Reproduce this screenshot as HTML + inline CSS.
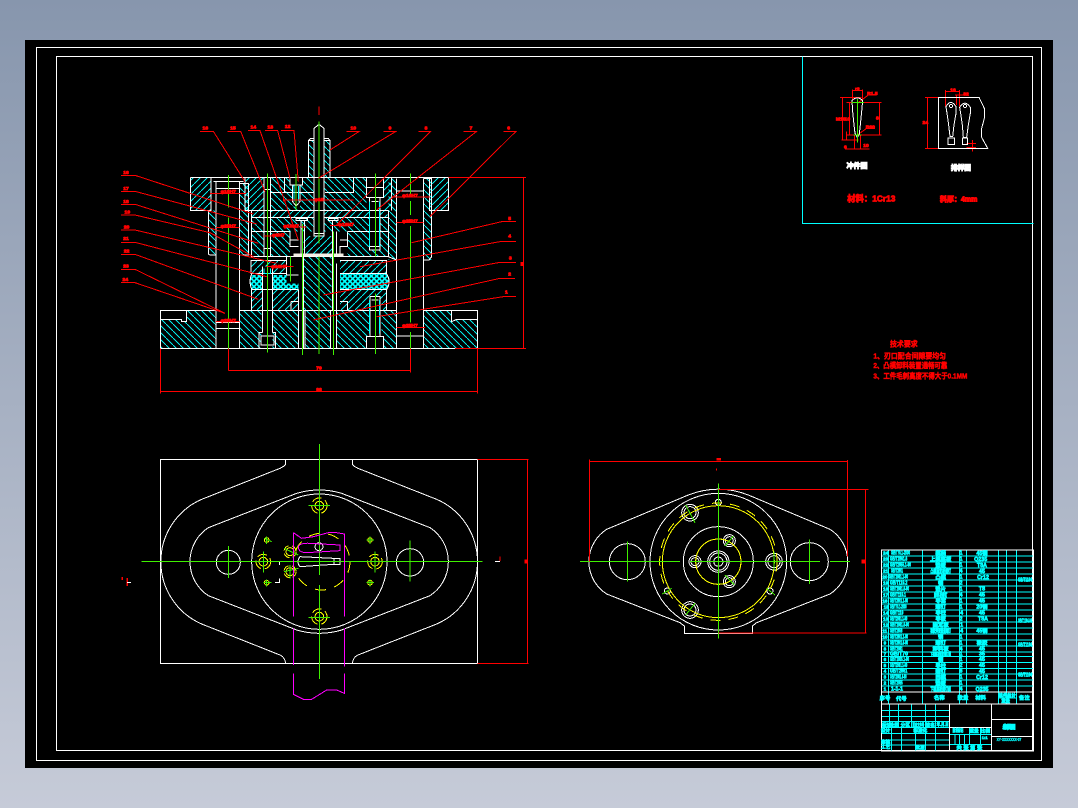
<!DOCTYPE html>
<html lang="zh"><head><meta charset="utf-8"><title>总装图</title>
<style>
html,body{margin:0;padding:0;width:1078px;height:808px;overflow:hidden;background:linear-gradient(#8796ad,#c6cbd8)}
svg{position:absolute;left:0;top:0;display:block}
text{font-family:"Liberation Sans","Noto Sans CJK SC",sans-serif;font-weight:700}
.w{stroke:#fff;fill:none;stroke-width:3}
.r{stroke:#f00;fill:none;stroke-width:3}
.g{stroke:#3ff000;fill:none;stroke-width:3}
.y{stroke:#ff0;fill:none;stroke-width:3}
.m{stroke:#f0f;fill:none;stroke-width:3}
.c{stroke:#0ff;fill:none;stroke-width:3}
.rt text{fill:#f00;stroke:#f00;stroke-width:2.500;text-anchor:middle;font-size:15px}
.ct text{fill:#0ff;stroke:#0ff;stroke-width:2;font-size:16px}
.mid text{text-anchor:middle}
</style></head><body>
<svg width="1078" height="808" viewBox="0 0 1078 808" shape-rendering="crispEdges">
<defs>
<pattern id="a" width="21" height="21" patternUnits="userSpaceOnUse"><path d="M-2 23L23-2" stroke="#00e8e8" stroke-width="2.6"/></pattern>
<pattern id="b" width="21" height="21" patternUnits="userSpaceOnUse"><path d="M-2-2L23 23" stroke="#00e8e8" stroke-width="2.6"/></pattern>
<pattern id="x" width="16" height="16" patternUnits="userSpaceOnUse"><path d="M0 0L16 16M16 0L0 16" stroke="#00ffff" stroke-width="4.500"/></pattern>
</defs>
<rect x="25" y="40" width="1028" height="728" fill="#000"/>
<rect x="36.500" y="47.500" width="1005" height="713" fill="none" stroke="#fff"/>
<rect x="56.500" y="56.500" width="976" height="694" fill="none" stroke="#fff"/>

<!-- section view -->
<g transform="translate(110 100) scale(.33333)">
<g>
<rect x="241" y="232" width="62" height="99" fill="url(#a)"/>
<rect x="958" y="232" width="58" height="99" fill="url(#a)"/>
<rect x="405" y="232" width="57" height="99" fill="url(#a)"/>
<rect x="482" y="232" width="130" height="99" fill="url(#b)"/>
<rect x="644" y="232" width="126" height="99" fill="url(#b)"/>
<rect x="820" y="232" width="25" height="99" fill="url(#a)"/>
<rect x="295" y="331" width="23" height="134" fill="url(#b)"/>
<rect x="388" y="250" width="27" height="215" fill="url(#b)"/>
<rect x="835" y="235" width="25" height="245" fill="url(#b)"/>
<rect x="940" y="235" width="25" height="245" fill="url(#b)"/>
<rect x="425" y="333" width="187" height="19" fill="url(#a)"/>
<rect x="643" y="333" width="190" height="19" fill="url(#a)"/>
<rect x="425" y="352" width="187" height="43" fill="url(#b)"/>
<rect x="643" y="352" width="190" height="43" fill="url(#b)"/>
<rect x="425" y="395" width="115" height="75" fill="url(#b)"/>
<rect x="580" y="408" width="88" height="52" fill="url(#a)"/>
<rect x="712" y="395" width="123" height="75" fill="url(#b)"/>
<rect x="425" y="482" width="105" height="38" fill="url(#a)"/>
<rect x="690" y="482" width="140" height="38" fill="url(#a)"/>
<path d="M425 525Q415 546 425 568H565V525Z" fill="url(#x)"/>
<path d="M690 522H830Q845 545 830 568H690Z" fill="url(#x)"/>
<rect x="425" y="568" width="33" height="63" fill="url(#a)"/>
<rect x="488" y="568" width="77" height="63" fill="url(#a)"/>
<rect x="690" y="568" width="140" height="63" fill="url(#a)"/>
<rect x="582" y="470" width="83" height="161" fill="url(#b)"/>
<rect x="585" y="631" width="75" height="114" fill="url(#b)"/>
<path d="M151 660H215V665H230V631H318V745H151Z" fill="url(#b)"/>
<rect x="388" y="631" width="67" height="114" fill="url(#b)"/>
<rect x="488" y="631" width="77" height="114" fill="url(#b)"/>
<rect x="680" y="631" width="100" height="114" fill="url(#b)"/>
<rect x="815" y="631" width="45" height="114" fill="url(#b)"/>
<path d="M940 631H1025V665L1040 658H1103V745H940Z" fill="url(#b)"/>
<rect x="595" y="122" width="17" height="110" fill="url(#b)"/>
<rect x="642" y="122" width="18" height="110" fill="url(#b)"/>
<!-- holes -->
<g fill="#000">
<rect x="462" y="232" width="20" height="238"/><rect x="458" y="500" width="30" height="200"/>
<rect x="540" y="232" width="38" height="25"/><rect x="548" y="255" width="22" height="65"/>
<rect x="770" y="232" width="50" height="60"/><rect x="778" y="292" width="32" height="160"/>
<rect x="778" y="590" width="32" height="155"/><rect x="770" y="710" width="50" height="35"/>
<rect x="540" y="395" width="40" height="75"/><rect x="668" y="395" width="44" height="75"/>
<rect x="530" y="470" width="52" height="80"/><rect x="665" y="470" width="25" height="161"/>
</g>
</g>
<path class="w" d="M241 232H1016V331H958V232M241 232V331H303V232M318 245V745M388 245V745M310 245H400M318 265H388M318 668H388M318 685H388M295 331V462L300 465H318M388 465H415V250H388M860 235V745M940 235V745M845 232V331M860 273H940M860 708H940M835 331V470L860 480M965 331V470L957 480H940M940 235H965V331M151 631H230V665H215V658H151ZM151 631V745H1103V631H1025V665L1040 658H1103M230 631H318M388 631H860M940 631H1025M405 232V331H835M425 333V470H835V333M425 352H612M643 352H835M425 395H540M712 395H835M423 482H530V520H423ZM690 482H830V520H690M425 522Q415 545 425 568H565M830 522Q845 545 830 568H690M425 568V631M830 568V631M580 470V745M668 470V631M585 631V745M662 631V745M565 568V745M680 490V745M540 395V440H565M540 420H565M712 395V440H690V470M690 420H712M543 605H565M543 605V631M690 605H712V631M530 470V525H565M612 400V85L627 73L642 85V400M612 400H642V408H612ZM595 232V122L602 115H612M660 232V122L655 115H642M595 122H612M642 122H660M558 355H592V362H558ZM656 355H684V362H656ZM668 362V460M680 395V460M573 362V470M583 362V460M462 232V470M482 232V470M462 268H482M462 445H482M458 500V697M488 500V697M447 745V697H458M497 745V697H488M453 708H492V735H453ZM482 277H610M645 277H730V232M523 232V277M540 232V255H578V232M548 255V305L558 318L570 305V255M770 232V262H820V232M770 262V292H820V262M778 292V450H810V292M785 305H805M780 440H810M770 745V710H820V745M780 710V590H810V710M785 600H805M582 470H665"/>
<path d="M548 258H552V305M566 258V305M779 305V440M809 305V440M779 600V700M809 600V700M462 505V520H482V505" stroke="#0ff" stroke-width="3" fill="none"/>
<rect x="550" y="460" width="150" height="10" fill="#f4f0e6"/>
<path class="g" d="M355 225V323M355 353V745M472 220V758M558 222V330M627 65V430M627 470V762M796 220V470M796 580V762M901 220V285M901 303V345M901 378V668M901 696V745M577 372V765M670 395V765M541 470V545"/>
<path class="r" d="M33 226H75L430 342M33 274H75L440 372M33 313H75L445 430M33 345H75L300 398L430 470M33 390H75L500 490M33 427H75L470 530M33 463H75L445 598M33 508H75L345 640M33 548H75L345 640M270 94H310L405 245M353 94H392L465 275M414 92H450L565 420M465 92H503L540 235M513 92H552L565 245M710 94H748L660 150M820 94H858L625 235M925 94H962L680 375M1060 94H1100L800 330M1180 94H1218L960 350M1218 365H1175L905 428M1218 424H1175L750 500M1218 487H1170L640 585M1215 535H1170L610 660M1218 590H1180L800 650M1015 232H1248M1035 745H1248M1241 232V745M355 745V812M901 745V818M355 812H901M151 745V880M1102 745V880M151 875H1102M300 281H408M318 383H388M845 291H960M860 368H940M318 665H388M860 682H945M462 408H520M520 292V305M520 300H730M525 381H590M660 377H725M470 500H550M627 20V45"/>
<rect x="1231" y="486" width="9" height="12" fill="#f00"/>
<g class="rt">
<text x="355" y="279">φ16H7</text><text x="355" y="382">φ25H7</text><text x="900" y="291">φ16H7</text><text x="900" y="367">φ25H7</text><text x="355" y="666">φ25H7</text><text x="900" y="681">φ25H7</text><text x="505" y="410">φ8H7</text><text x="627" y="303">φ18</text><text x="543" y="382">φ10H7</text><text x="708" y="378">φ10H7</text><text x="507" y="504">φ10H7</text>
<text x="627" y="808">79</text><text x="627" y="873">96</text>
<text x="286" y="88">16</text><text x="369" y="88">15</text><text x="430" y="86">14</text><text x="481" y="86">13</text><text x="533" y="84">12</text><text x="730" y="88">10</text><text x="840" y="88">9</text><text x="948" y="88">8</text><text x="1083" y="88">7</text><text x="1196" y="88">6</text>
<text x="48" y="222">16</text><text x="48" y="270">17</text><text x="48" y="309">18</text><text x="52" y="340">19</text><text x="50" y="385">20</text><text x="48" y="420">21</text><text x="50" y="458">22</text><text x="48" y="503">23</text><text x="46" y="543">24</text>
<text x="1199" y="360">5</text><text x="1199" y="413">4</text><text x="1201" y="478">3</text><text x="1199" y="527">2</text><text x="1189" y="580">1</text>
</g>
</g>

<!-- top right box -->
<g transform="translate(800 50) scale(.33333)">
<path class="c" d="M7 20V520H700"/>
<path class="r" d="M128 142V270M120 142H185M125 270H175M140 157H245M148 157V255M238 157V255M140 255H245M157 122H188M157 118V150M188 118V150M172 160L205 135H230M172 255L200 235H225M163 255V297M182 255V297M135 297H208M140 245V270M382 142V295M375 142H415M375 295H415M436 125H478M436 120V170M478 120V170M465 135H505M470 135V165M500 280H528M500 292H528M518 270V305"/>
<path class="w" d="M156 152Q172 135 188 152L185 185L182 215L178 252L172 262L165 250L161 215L158 185ZM415 142H537L553 175V205L545 235V262L563 295H415ZM438 170Q452 145 468 170V190L462 225L458 260H450L446 225L441 190ZM479 172Q494 147 511 172V190L505 225L500 262H490L487 225L482 190ZM444 264H464V284H444ZM487 264H503V284H487Z"/>
<circle cx="453" cy="168" r="5" class="w"/><circle cx="495" cy="168" r="5" class="w"/>
<path class="g" d="M155 157H192M172 147V277M160 255H185" stroke-width="4"/>
<g class="rt"><text x="172" y="122">r2</text><text x="217" y="135">R1.5</text><text x="211" y="235">R60</text><text x="122" y="212">M10</text><text x="142" y="212">10</text><text x="232" y="208">8</text><text x="198" y="291">10</text><text x="136" y="295">6</text><text x="376" y="222">24</text><text x="459" y="124">16</text><text x="498" y="137">32</text></g>
<g text-anchor="middle">
<text x="171" y="354" font-size="21" fill="#fff" stroke="#fff" stroke-width="3">冲件图</text>
<text x="483" y="360" font-size="20" fill="#fff" stroke="#fff" stroke-width="3">排样图</text>
<text x="214" y="454" font-size="25" fill="#f00" stroke="#f00" stroke-width="2.500">材料：1Cr13</text>
<text x="476" y="454" font-size="21" fill="#f00" stroke="#f00" stroke-width="3">料厚：4mm</text>
</g>
</g>

<!-- tech notes -->
<g transform="translate(860 330) scale(.33333)" fill="#f00" stroke="#f00" stroke-width="1.500">
<text x="90" y="50" font-size="22" textLength="83" lengthAdjust="spacingAndGlyphs">技术要求</text>
<text x="40" y="86" font-size="23" textLength="218" lengthAdjust="spacingAndGlyphs">1、刃口配合间隙要均匀</text>
<text x="40" y="114" font-size="23" textLength="222" lengthAdjust="spacingAndGlyphs">2、凸模卸料装置通畅可靠</text>
<text x="40" y="146" font-size="23" textLength="282" lengthAdjust="spacingAndGlyphs">3、工件毛刺高度不得大于0.1MM</text>
</g>

<!-- plan left -->
<g transform="translate(140 440) scale(.33333)">
<rect x="61" y="58" width="952" height="612" class="w"/>
<path class="w" d="M437 58V72Q435 78 420 85L185 178A204 204 0 0 0 185 552L420 645Q435 652 437 670M637 58V72Q639 78 654 85L890 178A204 204 0 0 1 890 552L654 645Q639 652 637 670M205 263L470 160Q538 140 605 160L870 263A122 122 0 0 1 870 467L605 570Q538 590 470 570L205 467A122 122 0 0 1 205 263ZM480 350L580 355H600V373H580L480 380Q468 365 480 350ZM582 355V373M418 375V365H465M418 415V427H405" />
<circle cx="538" cy="365" r="203" class="w"/><circle cx="265" cy="367" r="36" class="w"/><circle cx="810" cy="367" r="41" class="w"/><circle cx="537" cy="320" r="12" class="w"/>
<g class="y">
<circle cx="545" cy="365" r="85" stroke-dasharray="34 26"/>
<circle cx="538" cy="197" r="13"/><circle cx="538" cy="197" r="23" stroke-dasharray="30 12"/>
<circle cx="538" cy="530" r="13"/><circle cx="538" cy="530" r="23" stroke-dasharray="30 12"/>
<circle cx="370" cy="365" r="13"/><circle cx="370" cy="365" r="22" stroke-dasharray="30 12"/>
<circle cx="705" cy="365" r="13"/><circle cx="705" cy="365" r="22" stroke-dasharray="30 12"/>
<circle cx="450" cy="335" r="12"/><circle cx="450" cy="335" r="18" stroke-dasharray="20 10"/>
<circle cx="450" cy="395" r="12"/><circle cx="450" cy="395" r="18" stroke-dasharray="20 10"/>
<circle cx="380" cy="300" r="7"/><circle cx="690" cy="300" r="7"/><circle cx="380" cy="428" r="7"/><circle cx="690" cy="428" r="7"/>
</g>
<path class="g" d="M5 365H1028M538 12V405M538 435V717M265 318V414M810 302V425M505 197H570M505 532H570M370 335V398M705 335V398M432 325L475 345M432 395L475 385M450 375V415M372 295L395 305M680 300L702 300M370 428L395 428M680 428L702 428M380 290V312M690 290V312M380 418V440M690 418V440"/>
<path class="m" d="M460 278V530M460 565V675M460 700V763L490 778H515L560 750H590L613 760V700M613 680V565M613 530V282L590 278H565L520 290L485 295L460 278M475 320Q480 308 510 310L600 315V332L500 338Q475 338 475 320Z"/>
<path class="r" d="M1013 58H1165M1013 670H1165M1163 58V670"/>
<path d="M1065 365H1080" stroke="#fff" stroke-width="3"/>
<path d="M1080 350V363" stroke="#f00" stroke-width="4"/>
<rect x="1153" y="358" width="9" height="12" fill="#f00"/>
</g>
<path d="M127 578V586M122 577V580" stroke="#f00" stroke-width="1.500"/>
<rect x="127" y="582" width="4" height="1" fill="#fff"/>

<!-- plan right -->
<g transform="translate(575 450) scale(.33333)">
<path class="w" d="M328 550V528L315 518L95 432A115 115 0 0 1 95 238L340 135Q430 100 520 135L765 238A115 115 0 0 1 765 432L545 518L532 528V550Z"/>
<g class="w">
<circle cx="430" cy="335" r="205"/><circle cx="430" cy="335" r="105"/><circle cx="157" cy="335" r="54"/><circle cx="703" cy="335" r="57"/>
<circle cx="430" cy="335" r="32"/><circle cx="430" cy="335" r="26"/><circle cx="430" cy="335" r="14"/>
<circle cx="345" cy="188" r="25"/><circle cx="345" cy="188" r="18"/><circle cx="345" cy="480" r="25"/><circle cx="345" cy="480" r="18"/><circle cx="597" cy="335" r="25"/><circle cx="597" cy="335" r="18"/>
<circle cx="360" cy="335" r="18"/><circle cx="360" cy="335" r="12"/><circle cx="463" cy="272" r="18"/><circle cx="463" cy="272" r="12"/><circle cx="463" cy="395" r="18"/><circle cx="463" cy="395" r="12"/>
<circle cx="430" cy="157" r="9"/><circle cx="277" cy="423" r="9"/><circle cx="585" cy="423" r="9"/>
</g>
<g class="y"><circle cx="430" cy="335" r="168"/><circle cx="430" cy="335" r="176" stroke-dasharray="30 24"/><circle cx="430" cy="335" r="68"/></g>
<path class="g" d="M15 335H315M345 335H735M765 335H825M430 100V565M157 275V395M703 268V402M332 165L360 218M332 495L360 460M450 288L475 258M450 375L478 405M262 432L290 415M575 415L600 435M597 305V360"/>
<path class="r" d="M43 35H818M43 28V335M818 30V320M430 118H880M430 549H875M872 118V549M424 55V62"/>
<rect x="424" y="24" width="14" height="8" fill="#f00"/><rect x="860" y="328" width="10" height="12" fill="#f00"/>
</g>

<!-- title block -->
<g transform="translate(875 545) scale(.33333)">
<path class="c" d="M19 33H475M19 51H475M19 69H475M19 87H475M19 105H475M19 123H475M19 141H475M19 159H475M19 177H475M19 195H475M19 213H475M19 231H475M19 249H475M19 267H475M19 285H475M19 303H475M19 321H475M19 335H475M19 352H475M19 370H475M19 387H475M19 405H475M19 423H475M41 15V441M142 15V477M253 15V477M275 15V477M370 15V477M394 15V477M424 15V477M41 441V477M370 459H424M19 496H223M19 514H223M19 530H223M19 547H223M19 565H223M19 585H223M19 600H223M43 477V547M71 477V547M109 477V547M151 477V618M181 477V618M49 547V618M79 547V618M121 547V618M223 568H349M223 598H349M283 547V598M317 547V598M240 568V598M254 568V598M268 568V598"/>
<path class="w" d="M19 15H475V618H19ZM19 441H475M19 477H475M223 477V618M349 477V618M349 523H475M349 574H475M223 547H349"/>
<g class="ct" font-size="15">
<g style="font-size:13px">
<text x="24" y="29" style="font-size:14px">24</text><text x="24" y="47" style="font-size:14px">23</text><text x="24" y="65" style="font-size:14px">22</text><text x="24" y="83" style="font-size:14px">21</text><text x="22" y="101" style="font-size:14px">20</text><text x="24" y="119" style="font-size:14px">19</text><text x="24" y="137" style="font-size:14px">18</text><text x="24" y="155" style="font-size:14px">17</text><text x="22" y="172" style="font-size:14px">16</text><text x="26" y="190" style="font-size:14px">15</text><text x="24" y="208" style="font-size:14px">14</text><text x="24" y="226" style="font-size:14px">13</text><text x="24" y="244" style="font-size:14px">12</text><text x="22" y="262" style="font-size:14px">11</text><text x="22" y="280" style="font-size:14px">10</text><text x="26" y="298" style="font-size:14px">9</text><text x="26" y="316" style="font-size:14px">8</text><text x="26" y="332" style="font-size:14px">7</text><text x="26" y="348" style="font-size:14px">6</text><text x="26" y="366" style="font-size:14px">5</text><text x="26" y="383" style="font-size:14px">4</text><text x="26" y="401" style="font-size:14px">3</text><text x="26" y="419" style="font-size:14px">2</text><text x="26" y="437" style="font-size:14px">1</text>
</g>
<g>
<text x="48" y="29" textLength="57" lengthAdjust="spacingAndGlyphs">GB/T70.1-2000</text><text x="45" y="47" textLength="52" lengthAdjust="spacingAndGlyphs">GB/T2861.6</text><text x="45" y="65" textLength="63" lengthAdjust="spacingAndGlyphs">GB/T2855.1-90</text><text x="48" y="83" textLength="36" lengthAdjust="spacingAndGlyphs">GB/T2851</text><text x="42" y="101" textLength="57" lengthAdjust="spacingAndGlyphs">GB/T2861.1-90</text><text x="45" y="119" textLength="52" lengthAdjust="spacingAndGlyphs">GB/T119.2</text><text x="45" y="137" textLength="57" lengthAdjust="spacingAndGlyphs">GB/T2861.6-90</text><text x="45" y="155" textLength="48" lengthAdjust="spacingAndGlyphs">GB/T119.1</text><text x="45" y="172" textLength="54" lengthAdjust="spacingAndGlyphs">GB/T2861.1-90</text><text x="45" y="190" textLength="50" lengthAdjust="spacingAndGlyphs">GB/T70.1-2000</text><text x="45" y="208" textLength="40" lengthAdjust="spacingAndGlyphs">GB/T119</text><text x="45" y="226" textLength="52" lengthAdjust="spacingAndGlyphs">GB/T2861.1-90</text><text x="45" y="244" textLength="57" lengthAdjust="spacingAndGlyphs">GB/T2861.6-90</text><text x="45" y="262" textLength="37" lengthAdjust="spacingAndGlyphs">GB/T2858</text><text x="45" y="280" textLength="54" lengthAdjust="spacingAndGlyphs">GB/T2861.1-90</text><text x="45" y="298" textLength="54" lengthAdjust="spacingAndGlyphs">GB/T2861.6-90</text><text x="45" y="316" textLength="38" lengthAdjust="spacingAndGlyphs">GB/T2861</text><text x="45" y="332" textLength="54" lengthAdjust="spacingAndGlyphs">GB/T70</text><text x="45" y="348" textLength="57" lengthAdjust="spacingAndGlyphs">GB/T2855.1-90</text><text x="45" y="366" textLength="52" lengthAdjust="spacingAndGlyphs">GB/T2861.1-90</text><text x="45" y="383" textLength="52" lengthAdjust="spacingAndGlyphs">GB/T2861</text><text x="45" y="401" textLength="50" lengthAdjust="spacingAndGlyphs">GB/T2861.6-90</text><text x="45" y="419" textLength="38" lengthAdjust="spacingAndGlyphs">GB/T2855</text><text x="48" y="437" textLength="36" lengthAdjust="spacingAndGlyphs">1-1-1</text>
</g>
<g class="mid">
<text x="197" y="30">模柄</text><text x="197" y="48">上模座板</text><text x="197" y="66">垫板</text><text x="197" y="84" textLength="62" lengthAdjust="spacingAndGlyphs">凸模固定板螺钉</text><text x="197" y="102">凸模</text><text x="197" y="120">销</text><text x="197" y="138">垫片</text><text x="197" y="156" textLength="40" lengthAdjust="spacingAndGlyphs">卸料板螺钉</text><text x="197" y="173">导套</text><text x="197" y="191">螺钉</text><text x="197" y="209">导柱</text><text x="197" y="227">导板</text><text x="197" y="245">固定板</text><text x="197" y="263" textLength="62" lengthAdjust="spacingAndGlyphs">橡胶弹簧垫圈螺钉</text><text x="197" y="281">销</text><text x="197" y="299">螺钉</text><text x="197" y="317">卸料板</text><text x="197" y="333" textLength="62" lengthAdjust="spacingAndGlyphs">下模座板固定螺钉组</text><text x="197" y="349">销</text><text x="197" y="367">导柱</text><text x="197" y="384">螺钉</text><text x="197" y="402">凹模</text><text x="197" y="420">垫板</text><text x="197" y="438" textLength="62" lengthAdjust="spacingAndGlyphs">下模座板螺钉组</text>
</g>
<g class="mid" style="font-size:13px">
<text x="258" y="29">1</text><text x="258" y="47">1</text><text x="258" y="65">1</text><text x="258" y="83">4</text><text x="258" y="101">1</text><text x="258" y="119">2</text><text x="258" y="137">1</text><text x="258" y="155">4</text><text x="258" y="172">1</text><text x="258" y="190">1</text><text x="260" y="208">4</text><text x="258" y="226">2</text><text x="260" y="244">1</text><text x="260" y="262">4</text><text x="258" y="280">1</text><text x="258" y="298">1</text><text x="258" y="316">4</text><text x="258" y="332">1</text><text x="258" y="348">1</text><text x="258" y="366">2</text><text x="258" y="383">6</text><text x="258" y="401">1</text><text x="258" y="419">1</text><text x="258" y="437">4</text>
</g>
<g class="mid">
<text x="321" y="30">45钢</text><text x="317" y="48">Q235</text><text x="321" y="66">T8A</text><text x="321" y="84">45</text><text x="324" y="102">Cr12</text><text x="321" y="137">T8</text><text x="321" y="155">45</text><text x="321" y="173">45</text><text x="321" y="191">20钢</text><text x="321" y="209">45</text><text x="324" y="227">T8A</text><text x="321" y="262">45钢</text><text x="321" y="298">橡胶</text><text x="321" y="317">45</text><text x="321" y="331">35</text><text x="321" y="348">45</text><text x="321" y="366">45</text><text x="321" y="384">45</text><text x="321" y="402">Cr12</text><text x="321" y="438">Q235</text>
</g>
<g>
<text x="429" y="110" textLength="42" lengthAdjust="spacingAndGlyphs">GB/T1184</text><text x="429" y="232" textLength="42" lengthAdjust="spacingAndGlyphs">GB/T1184-96</text><text x="429" y="304" textLength="42" lengthAdjust="spacingAndGlyphs">GB/T1184</text><text x="429" y="394" textLength="42" lengthAdjust="spacingAndGlyphs">GB/T1184</text>
</g>
<g class="mid">
<text x="30" y="465">序号</text><text x="79" y="466">代号</text><text x="193" y="463">名称</text><text x="264" y="463">数量</text><text x="317" y="463">材料</text><text x="384" y="456" style="font-size:13px">单件</text><text x="409" y="456" style="font-size:13px">总计</text><text x="392" y="472" style="font-size:13px">重量</text><text x="448" y="464">备注</text>
<text x="35" y="545" style="font-size:14px">标记</text><text x="58" y="545" style="font-size:14px">处数</text><text x="91" y="544" style="font-size:14px">分区</text><text x="130" y="545" style="font-size:14px" textLength="36" lengthAdjust="spacingAndGlyphs">更改文件号</text><text x="166" y="545" style="font-size:14px">签名</text><text x="203" y="543" style="font-size:13px" textLength="36" lengthAdjust="spacingAndGlyphs">年.月.日</text>
<text x="32" y="561" style="font-size:14px">设计</text><text x="136" y="561" style="font-size:14px">标准化</text><text x="32" y="596" style="font-size:14px">审核</text><text x="32" y="610" style="font-size:14px">工艺</text><text x="135" y="612" style="font-size:14px">批准</text>
<text x="249" y="561" style="font-size:14px" textLength="32" lengthAdjust="spacingAndGlyphs">阶段标记</text><text x="297" y="563" style="font-size:14px">重量</text><text x="331" y="562" style="font-size:14px">比例</text><text x="329" y="582" style="font-size:12px">1:1</text>
<text x="283" y="614" style="font-size:16px">共 张 第 张</text>
<text x="402" y="551" style="font-size:13px;stroke-width:5" textLength="36" lengthAdjust="spacingAndGlyphs">总装图</text>
</g>
<text x="365" y="588" style="font-size:13px;stroke-width:1" textLength="74" lengthAdjust="spacingAndGlyphs">XY·XXXXXXX·07</text>
</g>
</g>
</svg>
</body></html>
